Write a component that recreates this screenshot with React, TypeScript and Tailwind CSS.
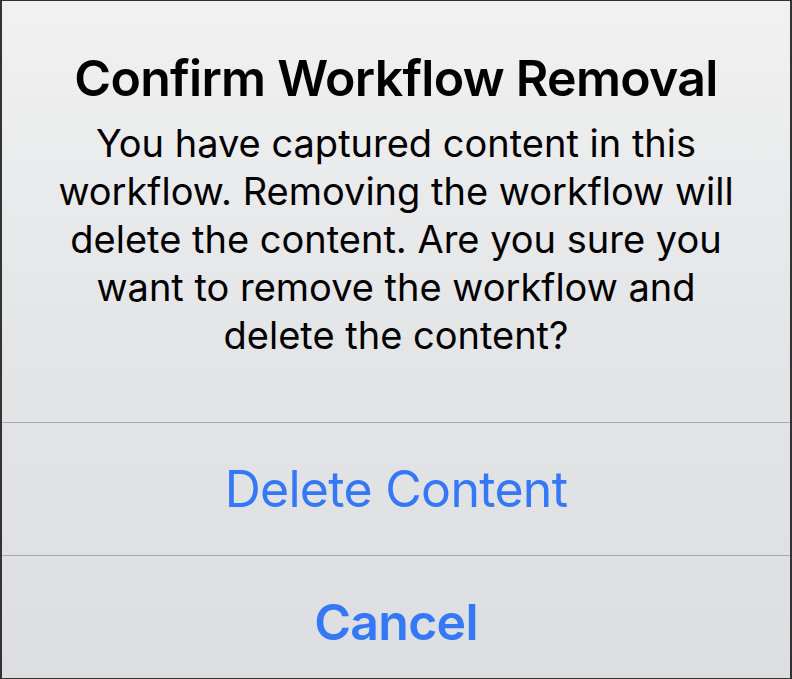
const messageLines = [
  'You have captured content in this',
  'workflow. Removing the workflow will',
  'delete the content. Are you sure you',
  'want to remove the workflow and',
  'delete the content?',
]

function AlertButton({ label, bold }: { label: string; bold?: boolean }) {
  return (
    <button
      className={
        bold
          ? 'flex h-[132px] w-full shrink-0 items-center justify-center border-t border-[#a9a9ad] text-[50px] leading-none font-semibold tracking-[-0.7px] text-[#3478f6]'
          : 'flex h-[133px] w-full shrink-0 items-center justify-center border-t border-[#a9a9ad] text-[50px] leading-none font-normal tracking-[-0.7px] text-[#3478f6]'
      }
      type="button"
    >
      {label}
    </button>
  )
}

export default function App() {
  return (
    <div className="flex h-[679px] w-[792px] flex-col overflow-hidden border-t border-r-2 border-b border-l-2 border-[#333333] bg-gradient-to-b from-[#f1f1f1] via-[#e4e5e7] to-[#dcdee1] font-['Inter',sans-serif] text-black antialiased">
      <div className="flex shrink-0 flex-col items-center px-6 pt-[47px] pb-[63px] text-center">
        <h1 className="m-0 text-[50px] leading-[60px] font-semibold tracking-[-0.7px]">Confirm Workflow Removal</h1>
        <p className="m-0 mt-[11px] text-[38px] leading-[48px]">
          {messageLines.map((line) => (
            <span className="block" key={line}>
              {line}
            </span>
          ))}
        </p>
      </div>
      <AlertButton label="Delete Content" />
      <AlertButton label="Cancel" bold />
    </div>
  )
}
